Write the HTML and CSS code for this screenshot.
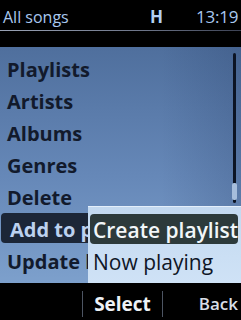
FILE: index.html
```html
<html>
<head>
<meta charset="UTF-8">
<meta name="viewport" content="width=device-width, initial-scale=1.0">
<link rel="stylesheet" href="styles.css">
</head>
<body>
<div class="phone">
    <div class="status">
        <span class="title">All songs</span>
        <span class="net">H</span>
        <span class="clock">13:19</span>
    </div>
    <div class="rule"></div>

    <div class="content">
        <ul class="menu">
            <li>Playlists</li>
            <li>Artists</li>
            <li>Albums</li>
            <li>Genres</li>
            <li>Delete</li>
            <li class="sel">Add to playlist</li>
            <li>Update library</li>
        </ul>

        <!-- scroll bar -->
        <div class="scroll"><div class="thumb"></div></div>

        <!-- sub menu -->
        <ul class="popup">
            <li class="sel">Create playlist</li>
            <li>Now playing</li>
        </ul>
    </div>

    <div class="softkeys">
        <span class="key left"></span>
        <span class="key mid">Select</span>
        <span class="key right">Back</span>
    </div>
</div>
</body>
</html>
```

FILE: styles.css
```css
*{ margin: 0; padding: 0; }
body { background: #000; font-family: "Open Sans", "DejaVu Sans", sans-serif; }
.phone { width: 241px; height: 320px; background: #000; overflow: hidden; }

.status { height: 30px; padding-top: 3px; box-sizing: border-box; display: flex; align-items: center; color: #a9c8ef; font-size: 16px; }
.status .title { padding-left: 3px; width: 147px; }
.status .net { font-weight: bold; font-size: 17px; color: #b3cff2; width: 46px; }
.status .clock { font-size: 17px; letter-spacing: -0.2px; }
.rule { height: 1px; margin-bottom: 16px; background: linear-gradient(to right, #9aa3b5, #6c7488 60%, #3c4254); }

.content { position: relative; height: 236px; overflow: hidden;
    background: linear-gradient(to bottom, #4f6f9d, #6688b8 55%, #7da0cc);
}
.content::after { content: ""; position: absolute; top: 0; right: 0; bottom: 0; width: 80px;
    background: linear-gradient(to right, rgba(20,40,80,0), rgba(20,40,80,0.18)); }

.menu { list-style: none; padding-top: 6px; }
.menu li { height: 30px; margin-bottom: 2px; line-height: 34px; padding-left: 7px; font-size: 20px; font-weight: bold; color: #121a2c; white-space: nowrap; }
.menu li.sel { margin-left: 1px; padding-left: 9px; border-radius: 4px; background: #1c2637; color: #bcd1ef; }

.scroll { position: absolute; top: 6px; right: 5px; width: 3px; height: 150px; background: #0c1424; border-radius: 2px; z-index: 1; }
.scroll .thumb { margin-top: 130px; height: 17px; margin-left: -1px; width: 5px; border-radius: 2px; background: #a7bedc; }

.popup { position: absolute; left: 88px; top: 159px; right: 0; bottom: 0; list-style: none; padding: 7px 3px 0 2px; z-index: 2;
    background: linear-gradient(to bottom, #c3d9f0, #cfe2f6); border-top: 1px solid #e4effb; }
.popup li { height: 30px; margin-bottom: 2px; line-height: 32px; padding-left: 3px; font-size: 21px; color: #0f1626; white-space: nowrap; }
.popup li.sel { background: #2d3a3b; color: #f2f6f8; font-weight: 600; border-radius: 4px; }

.softkeys { height: 37px; padding-top: 4px; box-sizing: border-box; display: flex; align-items: center; color: #eef2f6; }
.softkeys .key { height: 26px; line-height: 26px; }
.softkeys .left { width: 82px; border-right: 1px solid #4d5563; }
.softkeys .mid { width: 79px; text-align: center; font-size: 19px; font-weight: bold; border-right: 1px solid #4d5563; }
.softkeys .right { flex: 1; text-align: right; padding-right: 3px; font-size: 17px; font-weight: 600; color: #d8dee6; }
```
